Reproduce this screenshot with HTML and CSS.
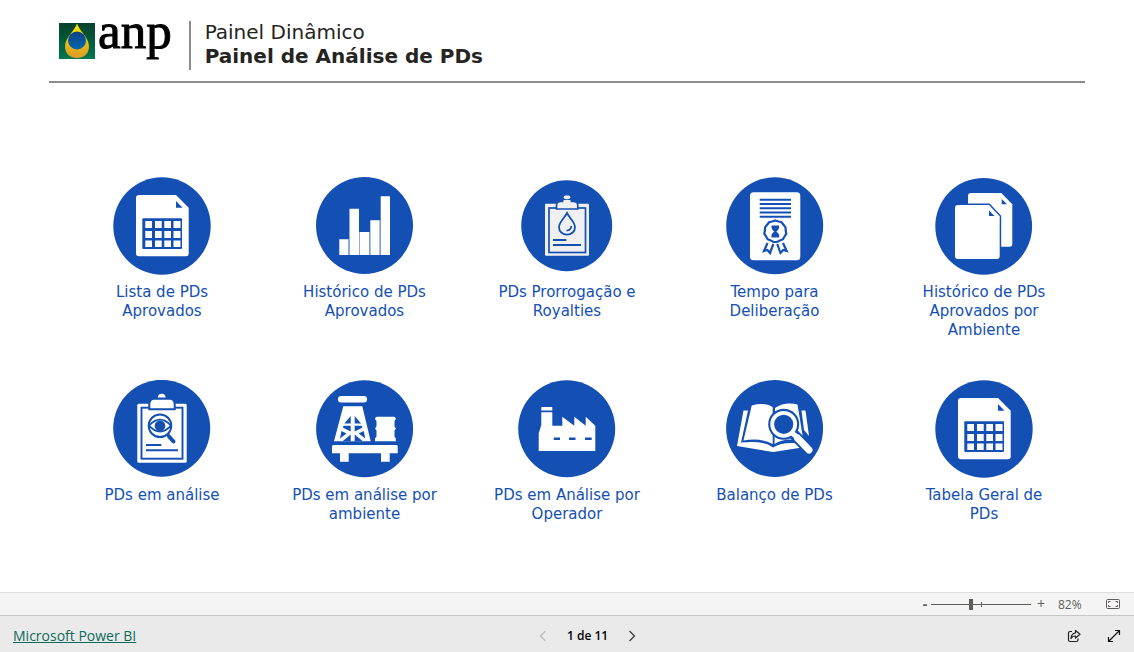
FILE: index.html
```html
<!DOCTYPE html>
<html lang="pt-BR">
<head>
<meta charset="utf-8">
<title>Painel de Análise de PDs</title>
<link rel="stylesheet" href="styles.css">
</head>
<body>
<header class="header">
  <div class="logo">
    <svg class="logo-mark" viewBox="0 0 36 36" aria-hidden="true">
      <defs>
        <linearGradient id="green" x1="0" y1="0" x2="0" y2="1"><stop offset="0" stop-color="#06402a"/><stop offset="1" stop-color="#00784f"/></linearGradient>
        <linearGradient id="gold" x1="0" y1="0" x2="0" y2="1"><stop offset="0" stop-color="#f6e800"/><stop offset="1" stop-color="#dd9a26"/></linearGradient>
        <linearGradient id="sea" x1="0" y1="0" x2="0" y2="1"><stop offset="0" stop-color="#123f85"/><stop offset="1" stop-color="#0068ae"/></linearGradient>
      </defs>
      <rect width="36" height="36" fill="url(#green)"/>
      <path d="M18 .5C15.500 8 6 14.500 6 23.500C6 30.500 11 35 18 35S30 30.500 30 23.500C30 14.500 20.500 8 18 .5Z" fill="url(#gold)"/>
      <circle cx="18" cy="17.500" r="9" fill="url(#sea)"/>
    </svg>
    <span class="logo-text">anp</span>
  </div>
  <div class="titles">
    <p class="subtitle">Painel Dinâmico</p>
    <h1 class="title">Painel de Análise de PDs</h1>
  </div>
</header>

<main class="menu">
  <button class="card" type="button">
    <svg class="icon" viewBox="0 0 98 98" aria-hidden="true">
      <g id="sheet">
        <circle class="b" cx="49" cy="49" r="48.700"/>
        <path class="w" d="M26 18H63L75.700 30.700V76.500Q75.700 79.300 73 79.300H26Q23 79.300 23 76.500V21Q23 18 26 18Z"/>
        <path class="b" d="M63 24V30.700H69.500Z"/>
        <rect class="b" x="29.300" y="41.300" width="39.700" height="30.700" rx="1"/>
        <path class="w" d="M32.300 44H39V51H32.300ZM42 44H48.700V51H42ZM51.300 44H58V51H51.300ZM60.500 44H67.500V51H60.500ZM32.300 54H39V61H32.300ZM42 54H48.700V61H42ZM51.300 54H58V61H51.300ZM60.500 54H67.500V61H60.500ZM32.300 63.500H39V70H32.300ZM42 63.500H48.700V70H42ZM51.300 63.500H58V70H51.300ZM60.500 63.500H67.500V70H60.500Z"/>
      </g>
    </svg>
    <span class="label">Lista de PDs<br>Aprovados</span>
  </button>

  <button class="card" type="button">
    <svg class="icon" viewBox="0 0 98 98" aria-hidden="true">
      <circle class="b" cx="48.500" cy="48.500" r="48.500"/>
      <path class="w" d="M23.300 62.300H32.500V78H23.300ZM33.500 31.700H43V78H33.500ZM44 55H53.300V78H44ZM54.300 43.300H63.700V78H54.300ZM64.700 19.300H74V78H64.700Z"/>
      <path d="M33 62V78M43.500 55V78M53.800 55V78M64.200 43.300V78" stroke="#8fabdc"/>
    </svg>
    <span class="label">Histórico de PDs<br>Aprovados</span>
  </button>

  <button class="card" type="button">
    <svg class="icon" viewBox="0 0 98 98" aria-hidden="true">
      <circle class="b" cx="48.700" cy="48.700" r="45.500"/>
      <rect x="27" y="26.700" width="44" height="52" rx="1" fill="#f0f0f0"/>
      <rect class="bl" x="31" y="31" width="36.500" height="44.500" stroke-width="1.700"/>
      <path d="M38.500 32V28Q39 24.500 42.500 24.500H44.500V23Q45 22 49 22T53.500 23V24.500H55.500Q59.500 24.500 59.800 28V32Z" fill="#f0f0f0" stroke="#1450b4" stroke-width="1.700"/>
      <rect x="45.700" y="18.500" width="6.600" height="3.500" rx="1.700" fill="#f0f0f0"/>
      <path class="bl" d="M49 36C46 42 41 45 41 50.200C41 54.500 44.500 57.600 49 57.600S57 54.500 57 50.200C57 45 52 42 49 36Z" stroke-width="1.800"/>
      <path class="bl" d="M53.300 49Q53 53.500 48.500 53.700" stroke-width="1.800"/>
      <path class="bl" d="M35 63H48.300M35 68H63" stroke-width="2"/>
    </svg>
    <span class="label">PDs Prorrogação e<br>Royalties</span>
  </button>

  <button class="card" type="button">
    <svg class="icon" viewBox="0 0 98 98" aria-hidden="true">
      <circle class="b" cx="48.700" cy="48.700" r="48.500"/>
      <rect class="w" x="24" y="15.300" width="50.300" height="68" rx="3.500"/>
      <path class="bl" d="M33.700 22.700H65M33.700 27H65M33.700 31.300H65M33.700 35.500H65M33.700 39.700H65" stroke-width="1.900"/>
      <path class="bl" d="M49.300 43.500L52.500 44.500L55.500 45.300L57.500 47.800L59.500 50.300L59.700 53.500L60.300 56.700L58.500 59.500L57 62.200L54 63.400L51 65H47.600L44.600 63.400L41.600 62.200L40.100 59.500L38.300 56.700L38.900 53.500L39.100 50.300L41.100 47.800L43.100 45.300L46.100 44.500Z" stroke-width="2.200"/>
      <path class="b" d="M45.500 48.500H53.100V50.500Q53 52.500 50.300 54.500Q53 56.500 53.100 58.500V60.500H45.500V58.500Q45.600 56.500 48.300 54.500Q45.600 52.500 45.500 50.500Z"/>
      <path class="bl" d="M41.500 66L38 74L41.500 73L44 76L47.300 67M57 66L60.700 74L57.200 73L54.500 76L51.300 67" stroke-width="2.200"/>
    </svg>
    <span class="label">Tempo para<br>Deliberação</span>
  </button>

  <button class="card" type="button">
    <svg class="icon" viewBox="0 0 98 98" aria-hidden="true">
      <circle class="b" cx="48.700" cy="49.300" r="48.400"/>
      <path class="w" d="M36 16H66.300L77.300 27.300V67Q77.300 69.700 74.500 69.700H36Q33 69.700 33 67V19Q33 16 36 16Z"/>
      <path class="b" d="M66.700 22V27.300H72Z"/>
      <path d="M23 28H54L64.700 39.300V79Q64.700 82 62 82H23Q20 82 20 79V31Q20 28 23 28Z" fill="#fff" stroke="#1450b4" stroke-width="3" paint-order="stroke"/>
      <path class="b" d="M54 33.500V39H59.500Z"/>
    </svg>
    <span class="label">Histórico de PDs<br>Aprovados por<br>Ambiente</span>
  </button>

  <button class="card" type="button">
    <svg class="icon" viewBox="0 0 98 98" aria-hidden="true">
      <circle class="b" cx="48.700" cy="48.300" r="48.500"/>
      <rect class="w" x="24.300" y="23.700" width="49.400" height="59" rx="1.500"/>
      <rect class="bl" x="28.500" y="27.700" width="41" height="51" stroke-width="1.900"/>
      <path d="M36.300 29.300V23.500Q37 18.700 41 18.700H57Q61 18.700 61.700 23.500V29.300Z" fill="#fff" stroke="#1450b4" stroke-width="2"/>
      <path class="w" d="M44.700 17.500Q45 13.700 48.700 13.700T52.700 17.500Z"/>
      <circle class="bl" cx="47" cy="45.700" r="11.300" stroke-width="2"/>
      <path class="bl" d="M36 45.700Q47 33.500 58 45.700Q47 57.500 36 45.700Z" stroke-width="1.700"/>
      <circle class="b" cx="47" cy="45.700" r="5.300"/>
      <path class="bl" d="M54.500 54L56 56" stroke-width="2.500"/>
      <path class="bl" d="M56 56.500L60.500 61.500" stroke-width="4" stroke-linecap="round"/>
      <path class="bl" d="M33 65H48.300M33 70.300H65" stroke-width="2"/>
    </svg>
    <span class="label">PDs em análise</span>
  </button>

  <button class="card" type="button">
    <svg class="icon" viewBox="0 0 98 98" aria-hidden="true">
      <circle class="b" cx="48.600" cy="48.700" r="48.500"/>
      <rect class="w" x="22" y="16" width="29" height="6.600" rx="3"/>
      <path class="w" d="M27.300 26.300H46.300L54.700 61.300H18Z"/>
      <path class="b" d="M34.700 36V43.500H28.300ZM38.700 36V43.500H45ZM27.500 45.800H34.700V51.500L27 47.800ZM38.700 45.800H45.800L46.300 47.800L38.700 51.500ZM25.500 51L30.500 53.500L24 58.500ZM47.700 51L42.700 53.500L49.300 58.500ZM34.700 54.500V61.300H26.500ZM38.700 54.500V61.300H46.800Z"/>
      <path class="w" d="M61 36.700H78Q80 37 79.800 39L78.500 41V46.500L80 48.500L78.500 50.500V56.500L79.800 58.500V61.300H59V58.500L60.500 56.500V50.500L59 48.500L60.500 46.500V41L59 39Q59 37 61 36.700Z"/>
      <path class="w" d="M17.500 65H80.500Q81.700 65 81.700 66.500V73.300H73.700V81.700H65V73.300H32.700V81.700H24V73.300H16V66.500Q16 65 17.500 65Z"/>
    </svg>
    <span class="label">PDs em análise por<br>ambiente</span>
  </button>

  <button class="card" type="button">
    <svg class="icon" viewBox="0 0 98 98" aria-hidden="true">
      <circle class="b" cx="48.700" cy="48.700" r="48.500"/>
      <path class="w" d="M23.300 27H34.300V30.500H23.300ZM23.300 32.300H34.300V45.700H44.300V36.700L56.300 45.700V36.700L67.700 45.700V36.700L77.300 45.700V71H20.700V53.500L23.300 45Z"/>
      <path class="b" d="M35.700 57.500H42V60H35.700ZM51 57.500H57.500V60H51ZM67 57.500H73.700V60H67Z"/>
    </svg>
    <span class="label">PDs em Análise por<br>Operador</span>
  </button>

  <button class="card" type="button">
    <svg class="icon" viewBox="0 0 98 98" aria-hidden="true">
      <circle class="b" cx="48.600" cy="48.500" r="48.500"/>
      <path class="w" d="M17.500 30.500H22L15 62.500Q37 60 47 67.500Q58 61 76 64L82.500 66.500L47.300 72L11 66Z"/>
      <path class="w" d="M25.700 25.500Q39 22 46.700 27.300V64Q35 57.500 17.500 60.500Z"/>
      <path class="w" d="M49 28Q59 21.500 71.500 24.500L77 58L69 60Q58 58 48.500 64Z"/>
      <path class="w" d="M75.500 30.500H79.500L83 56L78 50Z"/>
      <path d="M68 54.500L82.500 69.500" stroke="#1450b4" stroke-width="11" stroke-linecap="round"/>
      <circle class="b" cx="57.700" cy="44.300" r="15.500"/>
      <path d="M66 53L72 58" stroke="#fff" stroke-width="5"/>
      <path d="M71.500 58L83 70" stroke="#fff" stroke-width="7" stroke-linecap="round"/>
      <circle cx="57.700" cy="44.300" r="11.500" fill="#1450b4" stroke="#fff" stroke-width="3.800"/>
    </svg>
    <span class="label">Balanço de PDs</span>
  </button>

  <button class="card" type="button">
    <svg class="icon" viewBox="0 0 98 98" aria-hidden="true"><use href="#sheet"/></svg>
    <span class="label">Tabela Geral de<br>PDs</span>
  </button>
</main>

<div class="zoombar">
  <button class="tool sign minus" type="button" aria-label="Reduzir">-</button>
  <input class="slider" type="range" min="0" max="100" value="40" aria-label="Zoom">
  <button class="tool sign" type="button" aria-label="Ampliar">+</button>
  <output class="percent">82%</output>
  <button class="tool" type="button" aria-label="Ajustar à página">
    <svg class="glyph" viewBox="0 0 16 16" fill="none" stroke="#605e5c" aria-hidden="true">
      <rect x="1.500" y="3.500" width="13" height="9" rx="1"/>
      <path d="M3.500 7V5.500H5.500M10.500 5.500H12.500V7M12.500 9V10.500H10.500M5.500 10.500H3.500V9"/>
    </svg>
  </button>
</div>

<footer class="footer">
  <a class="brand" href="#">Microsoft Power BI</a>
  <nav class="pager" aria-label="Páginas">
    <button class="tool" type="button" aria-label="Anterior" disabled>
      <svg class="glyph" viewBox="0 0 16 16" fill="none" stroke="#bebbb8" stroke-width="1.200" aria-hidden="true"><path d="M10.500 3L5.500 8L10.500 13"/></svg>
    </button>
    <span class="page">1 de 11</span>
    <button class="tool" type="button" aria-label="Próxima">
      <svg class="glyph" viewBox="0 0 16 16" fill="none" stroke="#333" stroke-width="1.200" aria-hidden="true"><path d="M5.500 3L10.500 8L5.500 13"/></svg>
    </button>
  </nav>
  <div class="actions">
    <button class="tool" type="button" aria-label="Compartilhar">
      <svg class="glyph" viewBox="0 0 16 16" fill="none" stroke="#222" stroke-width="1.200" aria-hidden="true">
        <path d="M6 3.500H4Q2.500 3.500 2.500 5V12Q2.500 13.500 4 13.500H10.500Q12 13.500 12 12V10.500"/>
        <path d="M9.500 2.500L14 6.300L9.500 10V8Q6.500 7.800 5 10.500Q5.300 5.500 9.500 4.800Z" stroke-linejoin="round"/>
      </svg>
    </button>
    <button class="tool" type="button" aria-label="Tela cheia">
      <svg class="glyph" viewBox="0 0 16 16" fill="none" stroke="#111" stroke-width="1.200" aria-hidden="true"><path d="M2.500 13.500L13.500 2.500M9 2.500H13.500V7M2.500 9V13.500H7"/></svg>
    </button>
  </div>
</footer>
</body>
</html>
```
FILE: styles.css
```css
* {
  box-sizing: border-box;
}

body {
  margin: 0;
  min-height: 100vh;
  display: flex;
  flex-direction: column;
  background: #fff;
  font-family: "DejaVu Sans", Verdana, sans-serif;
}

button {
  padding: 0;
  border: 0;
  background: none;
  font: inherit;
  cursor: pointer;
}

.header {
  display: flex;
  align-items: center;
  margin: 0 49px;
  padding: 20px 0 11px 10px;
  border-bottom: 2px solid #8c8c8c;
}

.logo {
  display: flex;
  align-items: flex-start;
  gap: 3px;
  height: 49px;
  padding-top: 2px;
  padding-right: 17px;
  border-right: 2px solid #8c8c8c;
}

.logo-mark {
  width: 36px;
  height: 36px;
}

.logo-text {
  font-family: "Liberation Serif", "Times New Roman", serif;
  font-size: 51px;
  line-height: 16px;
  color: #000;
  -webkit-text-stroke: 1px #000;
}

.titles {
  padding: 0 0 2px 14px;
  color: #252423;
}

.subtitle,
.title {
  margin: 0;
  font-size: 20px;
  line-height: 24px;
  font-weight: 400;
}

.title {
  font-weight: 700;
}

.menu {
  flex: 1;
  display: grid;
  grid-template-columns: 202fr 203fr 202fr 213fr 206fr;
  align-content: start;
  row-gap: 40px;
  padding: 94px 47px 40px 61px;
}

.card {
  display: flex;
  flex-direction: column;
  align-items: center;
  gap: 8px;
  color: #1450b4;
}

.icon {
  width: 98px;
  height: 98px;
}

.b {
  fill: #1450b4;
}

.w {
  fill: #fff;
}

.bl {
  fill: none;
  stroke: #1450b4;
}

.label {
  font-size: 15px;
  line-height: 19px;
  text-align: center;
}

.zoombar {
  display: flex;
  align-items: center;
  justify-content: flex-end;
  height: 23px;
  padding-right: 13px;
  border-top: 1px solid #e1dfdd;
  background: #f4f4f4;
  color: #605e5c;
  font-family: "Open Sans", "Segoe UI", sans-serif;
  font-size: 12px;
}

.tool {
  display: flex;
  align-items: center;
  justify-content: center;
  color: inherit;
}

.sign {
  width: 12px;
  font-size: 14px;
  line-height: 16px;
}

.minus {
  font-weight: 700;
}

.slider {
  appearance: none;
  width: 100px;
  height: 12px;
  margin: 0 4px 0 0;
  background:
    linear-gradient(#605e5c, #605e5c) 50px 50% / 1px 5px no-repeat,
    linear-gradient(#605e5c, #605e5c) 0 50% / 100% 1px no-repeat;
}

.slider::-webkit-slider-thumb {
  appearance: none;
  width: 4px;
  height: 11px;
  background: #605e5c;
}

.percent {
  width: 24px;
  margin: 0 23px 0 11px;
}

.glyph {
  display: block;
  width: 16px;
  height: 16px;
}

.footer {
  display: grid;
  grid-template-columns: 13fr auto 12fr;
  align-items: center;
  height: 37px;
  padding: 3px 12px 0 13px;
  border-top: 1px solid #c8c6c4;
  background: #eaeaea;
  font-family: "Open Sans", "Segoe UI", sans-serif;
}

.brand {
  justify-self: start;
  color: #0b6a5b;
  font-size: 14px;
}

.pager {
  display: flex;
  align-items: center;
  gap: 16px;
}

.page {
  color: #000;
  font-size: 12px;
  font-weight: 600;
}

.actions {
  display: flex;
  justify-content: flex-end;
  gap: 24px;
}
```
